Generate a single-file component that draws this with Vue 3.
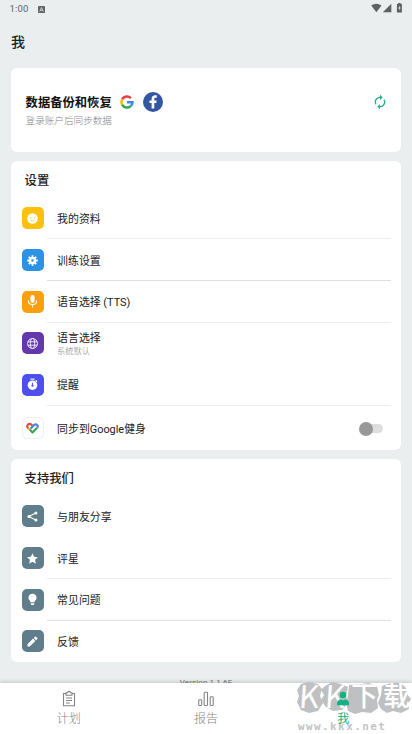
<script setup>
const settings = [
  { icon: 'face', color: '#fcc10f', label: '我的资料', line: 'faint', size: 'h42' },
  { icon: 'gear', color: '#2b92e6', label: '训练设置', line: 'line', size: 'h42' },
  { icon: 'mic', color: '#fb9f0c', label: '语音选择 (TTS)', line: 'faint', size: 'h42' },
  { icon: 'globe', color: '#6338ad', label: '语言选择', note: '系统默认', size: 'h41' },
  { icon: 'timer', color: '#4d50ec', label: '提醒', line: 'faint', size: 'h42' },
  { icon: 'fit', color: '#ffffff', label: '同步到Google健身', toggle: true, size: 'h44' }
]
const support = [
  { icon: 'share', color: '#607d8b', label: '与朋友分享', size: 'h42' },
  { icon: 'star', color: '#607d8b', label: '评星', line: 'faint', size: 'h42' },
  { icon: 'bulb', color: '#607d8b', label: '常见问题', line: 'line', size: 'h42' },
  { icon: 'pencil', color: '#607d8b', label: '反馈', size: 'h41' }
]
const groups = [
  { title: '设置', rows: settings, cls: 'settings' },
  { title: '支持我们', rows: support, cls: 'support' }
]
</script>

<template>
  <div class="screen">
    <header class="status">
      <span class="time">1:00</span>
      <svg class="app-mark" viewBox="0 0 8 8"><rect width="8" height="8" rx="1" fill="#626566" /><path d="M2 6.2L4 1.8l2 4.4M3 4.9h2" fill="none" stroke="#e9edee" stroke-width=".9" /></svg>
      <svg class="signals" viewBox="0 0 34 12">
        <path d="M.2 1.600Q5.300-2.100 10.500 1.600L5.400 8.300Z" fill="#5d6162" />
        <path d="M20.300-.2v8.500h-8.500z" fill="#5d6162" />
        <path d="M27.100-1h2.600v1h1.200v8.400h-5V0h1.200z" fill="#5d6162" />
        <path d="M28.700 1.400l-1.400 3h1v2.200l1.400-3h-1z" fill="#e9edee" />
      </svg>
    </header>
    <h1 class="page-title">我</h1>
    <main class="content">
      <section class="card backup">
        <div>
          <div class="backup-title">
            <span>数据备份和恢复</span>
            <svg class="google" viewBox="0 0 20 20">
              <circle cx="10" cy="10" r="9.500" fill="#fff" stroke="#f6f6f6" stroke-width=".6" />
              <g fill="none" stroke-width="2.500">
                <path d="M5.100 7.300A5.500 5.500 0 0 1 13.900 6.100" stroke="#ea4335" />
                <path d="M5.100 12.700A5.500 5.500 0 0 1 5.100 7.300" stroke="#fbbc05" />
                <path d="M13.700 14.100A5.500 5.500 0 0 1 5.100 12.700" stroke="#34a853" />
                <path d="M10 10.200h5.500A5.500 5.500 0 0 1 13.700 14.100" stroke="#4285f4" />
              </g>
            </svg>
            <svg class="facebook" viewBox="0 0 20 20">
              <circle cx="10" cy="10" r="10" fill="#3456a0" />
              <path d="M8.600 16.500V11H6.500V8.400h2.100V6.900c0-2.400 1.400-3.700 3.500-3.700l1.700.1v2.400h-1.200c-1 0-1.300.5-1.300 1.300v1.400h2.400l-.4 2.600h-2v5.500z" fill="#fff" />
            </svg>
          </div>
          <div class="backup-note">登录账户后同步数据</div>
        </div>
        <svg class="sync" viewBox="0 0 24 24" fill="#1eb58c"><path d="M12 6v3l4-4-4-4v3c-4.420 0-8 3.580-8 8 0 1.570.46 3.030 1.240 4.260L6.700 14.800A5.870 5.870 0 0 1 6 12c0-3.310 2.690-6 6-6zm6.760 1.740L17.300 9.200c.44.840.7 1.790.7 2.800 0 3.310-2.690 6-6 6v-3l-4 4 4 4v-3c4.420 0 8-3.580 8-8 0-1.570-.46-3.030-1.240-4.260z" /></svg>
      </section>

      <section v-for="g in groups" :key="g.title" class="card" :class="g.cls">
        <h2>{{ g.title }}</h2>
        <div v-for="r in g.rows" :key="r.label" class="row" :class="r.size">
          <div class="tile" :class="{ outlined: r.icon === 'fit' }" :style="{ background: r.color }">
            <svg viewBox="0 0 24 24" fill="#fff">
              <g v-if="r.icon === 'face'"><circle cx="12" cy="12" r="11.500" /><g fill="#fcc10f"><circle cx="7.800" cy="10.500" r="1.500" /><circle cx="16.200" cy="10.500" r="1.500" /></g><path d="M8 16q4 2.500 8 0" fill="none" stroke="#fcc10f" stroke-width="1.500" /></g>
              <g v-else-if="r.icon === 'gear'"><circle cx="12" cy="12" r="5.500" fill="none" stroke="#fff" stroke-width="5.500" /><path d="M12 .5v4M12 19.500v4M.5 12h4M19.500 12h4M3.900 3.900l3 3M17.100 17.100l3 3M3.900 20.100l3-3M17.100 6.900l3-3" stroke="#fff" stroke-width="4" /></g>
              <g v-else-if="r.icon === 'mic'"><rect x="7.500" y="-2" width="9" height="17" rx="4.500" /><path d="M3 10c0 12 18 12 18 0M12 18.500V25" fill="none" stroke="#fff" stroke-width="2.300" /></g>
              <g v-else-if="r.icon === 'globe'" fill="none" stroke="#fff" stroke-width="1.900"><circle cx="12" cy="12" r="10.800" /><ellipse cx="12" cy="12" rx="4.700" ry="10.800" /><path d="M2 8.300h20M2 15.700h20" /></g>
              <g v-else-if="r.icon === 'timer'"><path d="M7.500-1h9v2.500h-9z" /><circle cx="12" cy="13.500" r="10.500" /><path d="M19 3l3 3" stroke="#fff" stroke-width="3" /><path d="M12 8v5" stroke="#4d50ec" stroke-width="2" /><circle cx="12" cy="14.500" r="2.400" fill="#4d50ec" /></g>
              <g v-else-if="r.icon === 'fit'" fill="none" stroke-width="4.300" stroke-linejoin="round">
                <path d="M3.600 13C-1 8.500 3 2 8 4.100Q9.500 4.700 12 7.300" stroke="#e34b3e" />
                <path d="M8 13.400L14.600 6.500C19 2 24.600 7 21.500 11.300" stroke="#4f83df" />
                <path d="M3.200 12.400l4.300 4.300" stroke="#f3b62a" />
                <path d="M6.700 15.700L12 21l9.300-9.600" stroke="#3aa45b" />
              </g>
              <g v-else-if="r.icon === 'share'"><path d="M20 4L4 12l16 8" fill="none" stroke="#fff" stroke-width="2.300" /><circle cx="19.500" cy="4.300" r="3.300" /><circle cx="4.300" cy="12" r="3.300" /><circle cx="19.500" cy="19.700" r="3.300" /></g>
              <path v-else-if="r.icon === 'star'" d="M12 .5l3.500 7.700 8.300.9-6.200 5.700 1.700 8.400L12 19l-7.300 4.200 1.700-8.400L.2 9.100l8.300-.9z" />
              <g v-else-if="r.icon === 'bulb'"><path d="M12-.5a8.700 8.700 0 0 0-4.800 16V18h9.600v-2.500A8.700 8.700 0 0 0 12-.5z" /><path d="M8 20h8v2l-2 2h-4l-2-2z" /></g>
              <path v-else d="M1 18V23h5L18.300 10.700l-5-5zM22.500 6.500c.6-.6.6-1.400 0-2L19.500 1.500c-.6-.6-1.400-.6-2 0l-2.700 2.700 5 5z" />
            </svg>
          </div>
          <div class="row-body" :class="r.line">
            <div class="words">
              <div class="label">{{ r.label }}</div>
              <div v-if="r.note" class="note">{{ r.note }}</div>
            </div>
            <span v-if="r.toggle" class="switch"></span>
          </div>
        </div>
      </section>
      <p class="version">Version 1.1.6F</p>
    </main>

    <nav class="nav">
      <div class="tab">
        <svg viewBox="0 0 16 16" fill="none" stroke="#858585" stroke-width="1.100"><path d="M5 2.500H2.500v12.300h11V2.500H11" /><path d="M5 1.800h1.600a1.400 1.400 0 0 1 2.800 0H11v2.400H5zM5 7h6M5 9.500h6M5 12h4" /></svg>
        <span>计划</span>
      </div>
      <div class="tab">
        <svg viewBox="0 0 16 16" fill="none" stroke="#858585" stroke-width="1.100"><rect x=".7" y="8.700" width="3" height="5.800" rx=".8" /><rect x="6.200" y="1.300" width="3.300" height="13.200" rx=".8" /><rect x="12.200" y="5.700" width="3" height="8.800" rx=".8" /></svg>
        <span>报告</span>
      </div>
      <div class="tab active">
        <svg viewBox="0 0 16 16" fill="#0fb285"><circle cx="8" cy="4" r="3.300" /><path d="M2 14.300v-2C2 10 4 8.600 6 8.600q2 1.200 4 0c2 0 4 1.400 4 3.700v2z" /></svg>
        <span>我</span>
      </div>
      <div class="watermark">
        <svg class="blobs" viewBox="0 0 116 34" fill="#bfc0c1">
          <path d="M5 2l8-2 9 2 4 5-2 7 3 7-5 8-9 2-8-3-4-8 2-6-2-6z" />
          <path d="M29 4l7-4 9 2 7 3-2 8 2 8-6 7-9 1-7-4-5-7 3-5-3-5z" />
          <path d="M53 3l12-1 8-1 8 3 2 9-2 5 1 8-7 5-9-1-7 2-7-3-2-8 2-7z" />
          <path d="M86 4l9-3 9 0 6 4 1 7 4 5-3 5 1 5-8 4-8-2-6 2-6-4-3-6 3-8z" />
        </svg>
        <div class="brand"><span class="k">K</span><span class="k">K</span><span>下</span><span>载</span></div>
        <div class="site">www.kkx.net</div>
      </div>
    </nav>
  </div>
</template>

<style>
body { margin: 0; overflow: hidden; }
</style>

<style scoped>
* { box-sizing: border-box; }
svg { display: block; flex: none; overflow: visible; }
.screen { width: 412px; height: 734px; display: flex; flex-direction: column; background: #eaeeef; font-family: Roboto, "Noto Sans CJK SC", sans-serif; color: #202122; overflow: hidden; }
.status { height: 18px; flex: none; display: flex; align-items: center; padding: 0 7px 0 9.500px; }
.time { font-size: 9.500px; color: #606465; letter-spacing: .2px; line-height: 18px; }
.app-mark { width: 7px; height: 7px; margin-left: 9px; }
.signals { width: 34px; height: 12px; margin-left: auto; margin-top: 1px; }
.page-title { height: 50px; flex: none; margin: 0; padding: 0 11px; font-size: 14px; line-height: 48px; font-weight: 500; }
.content { flex: 1; min-height: 0; overflow: hidden; padding: 0 10.600px; display: flex; flex-direction: column; gap: 9px; }
.card { flex: none; background: #fff; border-radius: 6px; }
.backup { height: 84px; padding: 0 13px 0 15px; display: flex; align-items: center; justify-content: space-between; }
.backup-title { display: flex; align-items: center; height: 20px; color: #111; font-size: 12.300px; font-weight: 700; }
.google { width: 20px; height: 20px; margin-left: 5px; }
.facebook { width: 20px; height: 20px; margin-left: 6px; }
.backup-note { font-size: 9.600px; line-height: 16px; padding-top: 1px; margin-bottom: -1px; color: #858585; font-weight: 300; }
.sync { width: 16px; height: 16px; margin-bottom: 17px; }
.settings { height: 289px; }
.support { height: 203px; }
h2 { height: 36.400px; margin: 0; padding-left: 14px; font-size: 12.300px; line-height: 41px; font-weight: 500; }
.row { display: flex; align-items: center; padding: 0 10.500px 0 11px; }
.h41 { height: 41px; }
.h42 { height: 41.800px; }
.h44 { height: 45px; }
.tile { width: 22px; height: 22px; flex: none; border-radius: 5px; display: flex; align-items: center; justify-content: center; margin-right: 3.500px; }
.tile svg { width: 11px; height: 11px; }
.outlined { border: 1px solid #eee; }
.outlined svg { width: 13px; height: 12px; }
.row-body { flex: 1; align-self: stretch; display: flex; align-items: center; justify-content: space-between; padding-left: 10px; border-bottom: 1px solid transparent; }
.line { border-bottom-color: #e0e0e0; }
.faint { border-bottom-color: #ededed; }
.words { padding-top: 3px; }
.label { font-size: 10.900px; line-height: 15px; color: #222; white-space: nowrap; }
.note { font-size: 8.200px; line-height: 11px; color: #7d7d7d; font-weight: 300; }
.switch { width: 20px; height: 9px; margin: 2px 7.500px 0 0; border-radius: 5px; background: #dedede; position: relative; }
.switch::before { content: ""; position: absolute; left: -4px; top: -2.500px; width: 14px; height: 14px; border-radius: 50%; background: #989898; }
.version { margin: 6px 0 0; text-align: center; font-size: 8px; line-height: 12px; color: #6f7374; letter-spacing: .1px; }
.nav { height: 51px; flex: none; display: grid; grid-template-columns: repeat(3, 1fr); background: #fff; position: relative; box-shadow: 0 -1px 4px rgba(0, 0, 0, .18); }
.tab { display: flex; flex-direction: column; align-items: center; padding-top: 8px; color: #858585; font-size: 12px; line-height: 18px; gap: 3px; font-weight: 300; }
.tab svg { width: 16px; height: 16px; }
.active { color: #0fb285; font-weight: 400; position: relative; z-index: 2; }
.watermark { position: absolute; left: 296px; top: -1px; width: 116px; height: 52px; }
.blobs { position: absolute; left: 0; top: 0; width: 116px; height: 34px; }
.brand { position: absolute; left: 0; top: -1px; display: grid; grid-template-columns: 26px 26px 33px 31px; justify-items: center; color: #fff; font-size: 27px; line-height: 32px; font-weight: 500; }
.k { font-family: "Noto Sans CJK SC", sans-serif; font-size: 31px; line-height: 27px; font-weight: 400; transform: skewX(-4deg); }
.site { position: absolute; left: 2px; top: 37px; font: 700 11px/16px "DejaVu Sans Mono", monospace; letter-spacing: 1.400px; color: #c3c4c5; white-space: nowrap; }
</style>
